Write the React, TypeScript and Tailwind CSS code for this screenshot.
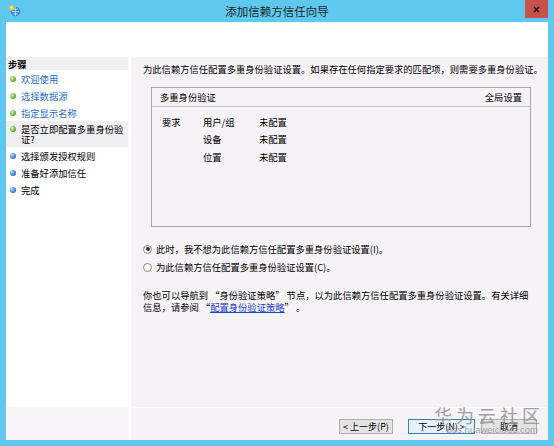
import React from "react";

const FONT = { fontFamily: '"Noto Sans CJK SC", "Noto Sans", sans-serif' };

const STEPS: { label: string; state: "done" | "current" | "todo" }[] = [
  { label: "欢迎使用", state: "done" },
  { label: "选择数据源", state: "done" },
  { label: "指定显示名称", state: "done" },
  { label: "是否立即配置多重身份验证?", state: "current" },
  { label: "选择颁发授权规则", state: "todo" },
  { label: "准备好添加信任", state: "todo" },
  { label: "完成", state: "todo" },
];

const ROWS = [
  { key: "要求", name: "用户/组", value: "未配置" },
  { key: "", name: "设备", value: "未配置" },
  { key: "", name: "位置", value: "未配置" },
];

function Dot({ green }: { green: boolean }) {
  return (
    <span
      className={`block h-[6px] w-[6px] shrink-0 rounded-full ${
        green
          ? "bg-[radial-gradient(circle_at_35%_35%,#d6f5b0,#5aa52a_70%)]"
          : "bg-[radial-gradient(circle_at_35%_35%,#b8dcff,#2a68d6_70%)]"
      }`}
    />
  );
}

function Radio({ checked }: { checked?: boolean }) {
  return (
    <span className="flex h-[9px] w-[9px] shrink-0 items-center justify-center rounded-full border border-[#8a8a8a] bg-white">
      {checked && <span className="h-[4px] w-[4px] rounded-full bg-[#333]" />}
    </span>
  );
}

function TitleIcon() {
  return (
    <svg width="13" height="13" viewBox="0 0 13 13">
      <circle cx="7.5" cy="7.5" r="4.8" fill="#3a8fd8" />
      <path d="M4 7.5h7M7.5 3v9M5 4.8q2.5 1.5 5 0M5 10.2q2.5-1.5 5 0" stroke="#bfe3ff" strokeWidth="0.7" fill="none" />
      <circle cx="4" cy="3.8" r="2.6" fill="#f2cf3a" />
      <circle cx="3.5" cy="3.3" r="1" fill="#fff3b0" />
    </svg>
  );
}

export default function App() {
  return (
    <div
      className="flex h-[446px] w-[554px] flex-col bg-[#5ec8ef] px-[6px] pb-[6px] text-[9.3px] leading-[12px] text-black"
      style={FONT}
    >
      {/* title bar */}
      <div className="relative flex h-[22px] shrink-0 items-center justify-center">
        <span className="absolute left-[2px] top-[4px]">
          <TitleIcon />
        </span>
        <span className="text-[11.5px] text-[#1e1e1e]">添加信赖方信任向导</span>
        <span className="absolute right-0 top-0 flex h-[18px] w-[23px] items-center justify-center bg-[#c7514b]">
          <svg width="7" height="7" viewBox="0 0 7 7">
            <path d="M1 1l5 5M6 1l-5 5" stroke="#2b1313" strokeWidth="1.6" />
          </svg>
        </span>
      </div>

      {/* header */}
      <div className="h-[35px] shrink-0 bg-white" />

      {/* body */}
      <div className="flex flex-1 bg-white">
        {/* steps */}
        <div className="flex w-[122px] shrink-0 flex-col">
          <div className="flex h-[13px] items-center bg-[#f0f0f0] pl-[2px] font-bold">步骤</div>
          <div className="flex-1">
            {STEPS.map((s) =>
              s.state === "current" ? (
                <div key={s.label} className="flex items-start gap-[5px] bg-[#efeff1] py-[3px] pl-[4px] pr-[4px] leading-[10px]">
                  <span className="mt-[2px] flex">
                    <Dot green />
                  </span>
                  <span>{s.label}</span>
                </div>
              ) : (
                <div key={s.label} className="flex h-[17px] items-center gap-[5px] pl-[4px]">
                  <Dot green={s.state === "done"} />
                  <span className={s.state === "done" ? "text-[#1f6ccc]" : ""}>{s.label}</span>
                </div>
              )
            )}
          </div>
          <div className="h-[33px] bg-[#f7f3f7]" />
        </div>

        <div className="w-[3px] shrink-0 bg-white" />

        {/* content */}
        <div className="flex flex-1 flex-col bg-[#f6f3f7]">
          <div className="flex-1 pl-[12px] pt-[6px]">
            <p className="whitespace-nowrap">
              为此信赖方信任配置多重身份验证设置。如果存在任何指定要求的匹配项，则需要多重身份验证。
            </p>

            <div className="ml-[8px] mt-[12px] h-[140px] w-[380px] border border-[#a8a8a8]">
              <div className="flex h-[19px] items-center justify-between border-b border-[#c6c6c6] px-[8px]">
                <span>多重身份验证</span>
                <span>全局设置</span>
              </div>
              <div className="pl-[10px] pt-[6px]">
                {ROWS.map((r) => (
                  <div key={r.name} className="flex h-[17.5px] items-center">
                    <span className="w-[41px]">{r.key}</span>
                    <span className="w-[56px]">{r.name}</span>
                    <span>{r.value}</span>
                  </div>
                ))}
              </div>
            </div>

            <div className="mt-[16px] flex flex-col gap-[6px]">
              <label className="flex h-[12px] items-center gap-[4px]">
                <Radio checked />
                <span>此时，我不想为此信赖方信任配置多重身份验证设置(I)。</span>
              </label>
              <label className="flex h-[12px] items-center gap-[4px]">
                <Radio />
                <span>为此信赖方信任配置多重身份验证设置(C)。</span>
              </label>
            </div>

            <p className="mt-[17px] whitespace-nowrap leading-[11.5px]">
              你也可以导航到 “身份验证策略” 节点，以为此信赖方信任配置多重身份验证设置。有关详细
              <br />
              信息，请参阅 “<span className="text-[#1c3fd0] underline">配置身份验证策略</span>” 。
            </p>
          </div>

          {/* buttons */}
          <div className="relative flex h-[33px] items-center justify-end gap-[6px] border-t border-white pr-[11px] pt-[4px]">
            <button className="h-[15px] w-[54px] border border-[#adadad] bg-[#e3e3e3] text-[9px] leading-[13px]">
              &lt; 上一步(P)
            </button>
            <button className="ml-[9px] h-[15px] w-[67px] border border-[#3c7fb1] bg-[#e5f1fb] text-[9px] leading-[13px]">
              下一步(N) &gt;
            </button>
            <button className="h-[15px] w-[56px] border border-[#adadad] bg-[#e3e3e3] text-[9px] leading-[13px]">
              取消
            </button>

            {/* watermark */}
            <div className="pointer-events-none absolute bottom-[5px] right-[4px] flex flex-col items-end text-[#8c8c8c]">
              <span className="text-[18px] leading-[19px] tracking-[4px] opacity-80">华为云社区</span>
              <span
                className="mr-[6px] text-[9.5px] leading-[10px] opacity-70"
                style={{ fontFamily: '"Liberation Sans", sans-serif' }}
              >
                bbs.huaweicloud.com
              </span>
            </div>
          </div>
        </div>
      </div>
    </div>
  );
}
